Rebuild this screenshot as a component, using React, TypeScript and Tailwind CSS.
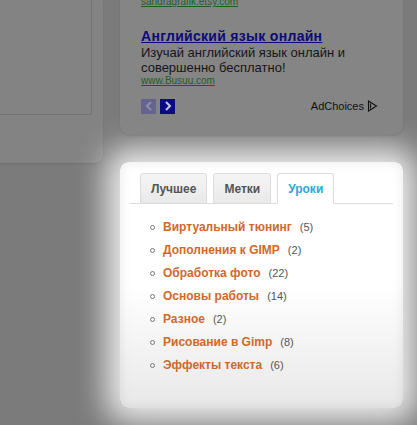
import React from 'react';

const lessons = [
  { title: 'Виртуальный тюнинг', count: 5 },
  { title: 'Дополнения к GIMP', count: 2 },
  { title: 'Обработка фото', count: 22 },
  { title: 'Основы работы', count: 14 },
  { title: 'Разное', count: 2 },
  { title: 'Рисование в Gimp', count: 8 },
  { title: 'Эффекты текста', count: 6 },
];

const tabs = [
  { id: 'best', label: 'Лучшее' },
  { id: 'tags', label: 'Метки' },
  { id: 'lessons', label: 'Уроки' },
];

function AdBlock() {
  return (
    <div className="relative h-[139px] -mt-[4px] rounded-b-[10px] bg-[#858585] shadow-[0_1px_2px_rgba(0,0,0,0.12)] pl-[21px] pr-[22px] text-[#111]">
      <div className="text-[10px] leading-[12px] text-[#1f5c1f] underline">sandragrafik.etsy.com</div>
      <div className="mt-[19px] text-[14px] leading-[18px] font-bold text-[#0c0a7a] underline tracking-[0.3px]">
        Английский язык онлайн
      </div>
      <div className="text-[13px] leading-[15px] text-[#161616]">
        <p>Изучай английский язык онлайн и</p>
        <p>совершенно бесплатно!</p>
      </div>
      <div className="text-[10px] leading-[12px] text-[#1f5c1f] underline">www.Busuu.com</div>
      <div className="mt-[11px] flex items-center justify-between">
        <div className="flex gap-[4px]">
          <span className="flex h-[15px] w-[15px] items-center justify-center bg-[#64648f]">
            <svg width="8" height="10" viewBox="0 0 8 10">
              <path d="M6 1 L2 5 L6 9" fill="none" stroke="#8f8fb5" strokeWidth="2" />
            </svg>
          </span>
          <span className="flex h-[15px] w-[15px] items-center justify-center bg-[#0a0a85]">
            <svg width="8" height="10" viewBox="0 0 8 10">
              <path d="M2 1 L6 5 L2 9" fill="none" stroke="#c8c8e6" strokeWidth="2" />
            </svg>
          </span>
        </div>
        <div className="flex items-center gap-[3px] pr-[3px] text-[11px] text-[#111]">
          <span>AdChoices</span>
          <svg width="11" height="12" viewBox="0 0 11 12">
            <path d="M1.5 1 L9.5 6 L1.5 11 Z M3.5 3.5 L3.5 8.5" fill="none" stroke="#111" strokeWidth="1.1" />
          </svg>
        </div>
      </div>
    </div>
  );
}

function LessonsPanel() {
  return (
    <div className="mt-[27px] h-[246px] rounded-[8px] bg-gradient-to-b from-white via-white to-[#e8e8e8] shadow-[0_0_30px_14px_rgba(255,255,255,0.85),inset_0_0_12px_rgba(0,0,0,0.09)]">
      <div className="mx-[10px] pt-[11px] flex gap-[6px] border-b border-[#dcdcdc] pl-[10px]">
        {tabs.map((tab) => (
          <div
            key={tab.id}
            className={`-mb-px h-[31px] rounded-t-[3px] border border-[#dcdcdc] px-[10px] flex items-center text-[12px] font-bold ${
              tab.id === 'lessons'
                ? 'bg-white border-b-white text-[#2aa8d8]'
                : 'bg-gradient-to-b from-[#f5f5f5] to-[#e9e9e9] text-[#555]'
            }`}
          >
            {tab.label}
          </div>
        ))}
      </div>
      <ul className="mt-[14px] pl-[30px] flex flex-col gap-[5px]">
        {lessons.map((item) => (
          <li key={item.title} className="flex items-center h-[18px] text-[12px]">
            <span className="h-[5px] w-[5px] rounded-full border border-[#777] mr-[8px]" />
            <span className="font-bold text-[#d0682a]">{item.title}</span>
            <span className="ml-[8px] text-[11px] text-[#555]">({item.count})</span>
          </li>
        ))}
      </ul>
    </div>
  );
}

export default function App() {
  return (
    <div className="w-[417px] h-[425px] overflow-hidden bg-[#7b7b7b] flex font-['Liberation_Sans',Arial,sans-serif]">
      {/* Dimmed main column */}
      <div className="w-[103px] shrink-0 h-[163px] rounded-br-[8px] bg-[#838383] shadow-[0_1px_2px_rgba(0,0,0,0.12)]">
        <div className="w-[92px] h-[115px] border-r border-b border-[#747474] rounded-br-[3px]" />
      </div>
      {/* Sidebar */}
      <div className="ml-[17px] w-[283px] shrink-0">
        <AdBlock />
        <LessonsPanel />
      </div>
    </div>
  );
}
